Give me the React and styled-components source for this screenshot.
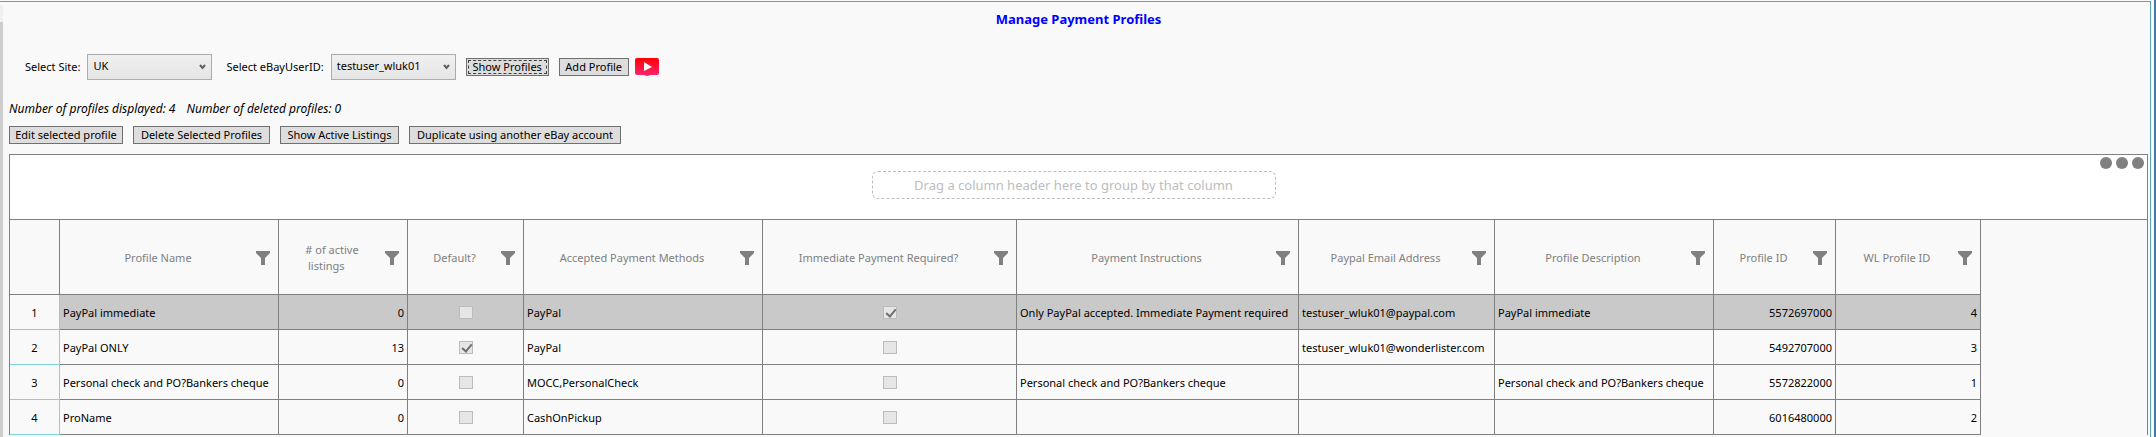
import React from "react";
import { useState } from "react";
import styled, { createGlobalStyle } from "styled-components";

const columns = [
  { key: "name", label: "Profile Name", width: 219 },
  { key: "listings", label: "# of active\nlistings\u00a0\u00a0\u00a0\u00a0", width: 129, align: "right" },
  { key: "isDefault", label: "Default?", width: 116, check: true },
  { key: "methods", label: "Accepted Payment Methods", width: 239 },
  { key: "immediate", label: "Immediate Payment Required?", width: 254, check: true },
  { key: "instructions", label: "Payment Instructions", width: 282 },
  { key: "email", label: "Paypal Email Address", width: 196 },
  { key: "description", label: "Profile Description", width: 219 },
  { key: "profileId", label: "Profile ID", width: 122, align: "right" },
  { key: "wlId", label: "WL Profile ID", width: 145, align: "right" },
];

const profiles = [
  {
    name: "PayPal immediate",
    listings: 0,
    isDefault: false,
    methods: "PayPal",
    immediate: true,
    instructions: "Only PayPal accepted. Immediate Payment required",
    email: "testuser_wluk01@paypal.com",
    description: "PayPal immediate",
    profileId: "5572697000",
    wlId: 4,
  },
  {
    name: "PayPal ONLY",
    listings: 13,
    isDefault: true,
    methods: "PayPal",
    immediate: false,
    instructions: "",
    email: "testuser_wluk01@wonderlister.com",
    description: "",
    profileId: "5492707000",
    wlId: 3,
  },
  {
    name: "Personal check and PO?Bankers cheque",
    listings: 0,
    isDefault: false,
    methods: "MOCC,PersonalCheck",
    immediate: false,
    instructions: "Personal check and PO?Bankers cheque",
    email: "",
    description: "Personal check and PO?Bankers cheque",
    profileId: "5572822000",
    wlId: 1,
  },
  {
    name: "ProName",
    listings: 0,
    isDefault: false,
    methods: "CashOnPickup",
    immediate: false,
    instructions: "",
    email: "",
    description: "",
    profileId: "6016480000",
    wlId: 2,
  },
];

const FilterIcon = () => (
  <svg width="14" height="14" viewBox="0 0 14 14" aria-hidden="true">
    <path d="M0 0h14v2L9 7v7H5V7L0 2z" fill="#808080" />
  </svg>
);

const VideoIcon = () => (
  <svg width="24" height="18" viewBox="0 0 24 18" aria-hidden="true">
    <defs>
      <linearGradient id="video" x1="0" y1="0" x2="0" y2="1">
        <stop offset="0" stopColor="#ff0000" />
        <stop offset="1" stopColor="#ff2470" />
      </linearGradient>
    </defs>
    <rect width="24" height="17" rx="2" fill="url(#video)" />
    <ellipse cx="12" cy="9" rx="7" ry="9" fill="url(#video)" />
    <path d="M9 4l8 5-8 4z" fill="#fff" />
  </svg>
);

const Dropdown = ({ id, options }) => (
  <SelectBox>
    <select id={id} defaultValue={options[0]}>
      {options.map((option) => (
        <option key={option}>{option}</option>
      ))}
    </select>
    <svg width="7" height="6" viewBox="0 0 7 6" aria-hidden="true">
      <path d="M1 1l2.5 3L6 1" fill="none" stroke="#606060" strokeWidth="2" />
    </svg>
  </SelectBox>
);

const App = () => {
  const [selected, setSelected] = useState(0);

  const renderCell = (col, profile) => {
    if (col.check) {
      return (
        <CheckBox
          type="checkbox"
          checked={profile[col.key]}
          disabled
          aria-label={`${col.label} ${profile.name}`}
        />
      );
    }
    return profile[col.key];
  };

  return (
    <Window>
      <GlobalStyle />
      <SideStrip />
      <Page>
        <Title>Manage Payment Profiles</Title>
        <Toolbar>
          <Field>
            <label htmlFor="site">Select Site:</label>
            <Dropdown id="site" options={["UK"]} />
          </Field>
          <Field>
            <label htmlFor="user">Select eBayUserID:</label>
            <Dropdown id="user" options={["testuser_wluk01"]} />
          </Field>
          <Button $width={83} $dotted>Show Profiles</Button>
          <Button $width={70}>Add Profile</Button>
          <VideoLink href="#video-help" aria-label="Video help">
            <VideoIcon />
          </VideoLink>
        </Toolbar>
        <Counts>
          <span>Number of profiles displayed: {profiles.length}</span>
          <span>Number of deleted profiles: 0</span>
        </Counts>
        <Actions>
          <Button $width={114}>Edit selected profile</Button>
          <Button $width={137}>Delete Selected Profiles</Button>
          <Button $width={119}>Show Active Listings</Button>
          <Button $width={212}>Duplicate using another eBay account</Button>
        </Actions>
        <Grid>
          <GroupPanel>
            <DropHint>Drag a column header here to group by that column</DropHint>
            <MenuButton aria-label="Grid menu">
              <i />
              <i />
              <i />
            </MenuButton>
          </GroupPanel>
          <Table>
            <colgroup>
              <Col $width={50} />
              {columns.map((col) => (
                <Col key={col.key} $width={col.width} />
              ))}
            </colgroup>
            <thead>
              <tr>
                <HeadCell />
                {columns.map((col) => (
                  <HeadCell key={col.key} scope="col">
                    <HeadContent>
                      <span>{col.label}</span>
                      <FilterButton aria-label={`Filter ${col.label}`}>
                        <FilterIcon />
                      </FilterButton>
                    </HeadContent>
                  </HeadCell>
                ))}
              </tr>
            </thead>
            <tbody>
              {profiles.map((profile, index) => (
                <Row
                  key={profile.profileId}
                  $selected={index === selected}
                  onClick={() => setSelected(index)}
                >
                  <RowNumber scope="row">{index + 1}</RowNumber>
                  {columns.map((col) => (
                    <Cell key={col.key} $align={col.check ? "center" : col.align}>
                      {renderCell(col, profile)}
                    </Cell>
                  ))}
                </Row>
              ))}
            </tbody>
          </Table>
        </Grid>
      </Page>
    </Window>
  );
};

const GlobalStyle = createGlobalStyle`
  * {
    box-sizing: border-box;
  }
  body {
    margin: 0;
    background: #f9f9f9;
    color: #000;
    font: 11px/16px "Noto Sans", "Open Sans", sans-serif;
  }
  button, select {
    font: inherit;
    color: inherit;
  }
`;

const Window = styled.div`
  display: flex;
  min-height: 100vh;
  padding: 1px 3px 0 0;
  border-right: 2px solid #4678a8;
`;

const SideStrip = styled.div`
  width: 3px;
  margin-top: 4px;
  border-top: 17px solid #f0f0f0;
  background: #cdcdcd;
`;

const Page = styled.main`
  flex: 1;
  min-width: 0;
  margin-left: -3px;
  padding: 8px 2px 0 9px;
  border-top: 1px solid #5ba3c0;
  border-right: 1px solid #5ba3c0;
`;

const Title = styled.h1`
  margin: 0;
  font-size: 13px;
  line-height: 18px;
  text-align: center;
  color: #0000ff;
`;

const Toolbar = styled.div`
  display: flex;
  align-items: center;
  gap: 10px;
  margin-top: 26px;
  padding-left: 16px;
`;

const Field = styled.div`
  display: flex;
  align-items: center;
  gap: 7px;
  margin-right: 4px;

  & + & {
    margin-right: 0;
  }
`;

const SelectBox = styled.div`
  display: grid;
  align-items: center;
  width: 125px;

  select, svg {
    grid-area: 1 / 1;
  }
  select {
    appearance: none;
    height: 26px;
    padding: 0 20px 3px 5px;
    border: 1px solid #acacac;
    border-radius: 0;
    background: linear-gradient(#f0f0f0, #e5e5e5);
  }
  svg {
    justify-self: end;
    margin-right: 6px;
    pointer-events: none;
  }
`;

const Button = styled.button`
  min-width: ${(props) => props.$width}px;
  height: 18px;
  padding: 0 2px;
  border: 1px solid #707070;
  background: #dddddd;
  line-height: 16px;
  white-space: nowrap;
  outline: ${(props) => (props.$dotted ? "1px dashed #404040" : "none")};
  outline-offset: -3px;
`;

const VideoLink = styled.a`
  display: flex;
  margin-left: -4px;
`;

const Counts = styled.div`
  display: flex;
  gap: 11px;
  margin-top: 21px;
  font-size: 12px;
  font-style: italic;
`;

const Actions = styled.div`
  display: flex;
  gap: 10px;
  margin-top: 9px;
`;

const Grid = styled.section`
  margin-top: 10px;
  border: 1px solid #808080;
  border-bottom: 0;
`;

const GroupPanel = styled.div`
  display: grid;
  grid-template-columns: 1fr auto 1fr;
  align-items: start;
  height: 65px;
  padding: 0 3px;
  border-bottom: 1px solid #808080;
  background: #fff;
`;

const DropHint = styled.div`
  grid-column: 2;
  width: 404px;
  margin-top: 16px;
  margin-right: 10px;
  padding: 3px 0;
  border: 1px dashed #bdbdbd;
  border-radius: 6px;
  color: #bdbdbd;
  font-size: 13px;
  line-height: 20px;
  text-align: center;
`;

const MenuButton = styled.button`
  display: flex;
  gap: 4px;
  justify-self: end;
  margin-top: 2px;
  padding: 0;
  border: 0;
  background: none;

  i {
    width: 12px;
    height: 12px;
    border-radius: 50%;
    background: #808080;
  }
`;

const Table = styled.table`
  width: 1971px;
  table-layout: fixed;
  border-collapse: separate;
  border-spacing: 0;
`;

const Col = styled.col`
  width: ${(props) => props.$width}px;
`;

const HeadCell = styled.th`
  height: 75px;
  padding: 1px 8px 0 0;
  border-right: 1px solid #808080;
  border-bottom: 1px solid #808080;
  color: #808080;
  font-weight: 400;
`;

const HeadContent = styled.div`
  display: flex;
  align-items: center;

  span {
    flex: 1;
    white-space: pre-line;
  }
`;

const FilterButton = styled.button`
  display: flex;
  padding: 0;
  border: 0;
  background: none;
`;

const RowNumber = styled.th`
  padding: 1px 0 0;
  border-right: 1px solid #7fd3df;
  border-bottom: 1px solid #7fd3df;
  background: #f9f9f9;
  font-weight: 400;
`;

const Cell = styled.td`
  height: 35px;
  padding: 1px 3px 0;
  border-right: 1px solid #808080;
  border-bottom: 1px solid #808080;
  text-align: ${(props) => props.$align || "left"};
  white-space: nowrap;
`;

const Row = styled.tr`
  background: ${(props) => (props.$selected ? "#c9c9c9" : "#f9f9f9")};
`;

const CheckBox = styled.input`
  appearance: none;
  display: block;
  width: 14px;
  height: 13px;
  margin: 0 auto;
  border: 1px solid #bcbcbc;
  background: #e6e6e6;

  &:checked::before {
    content: "";
    display: block;
    width: 4px;
    height: 8px;
    margin: 0 0 0 4px;
    border: solid #707070;
    border-width: 0 2px 2px 0;
    transform: rotate(40deg);
  }
`;

export default App;
